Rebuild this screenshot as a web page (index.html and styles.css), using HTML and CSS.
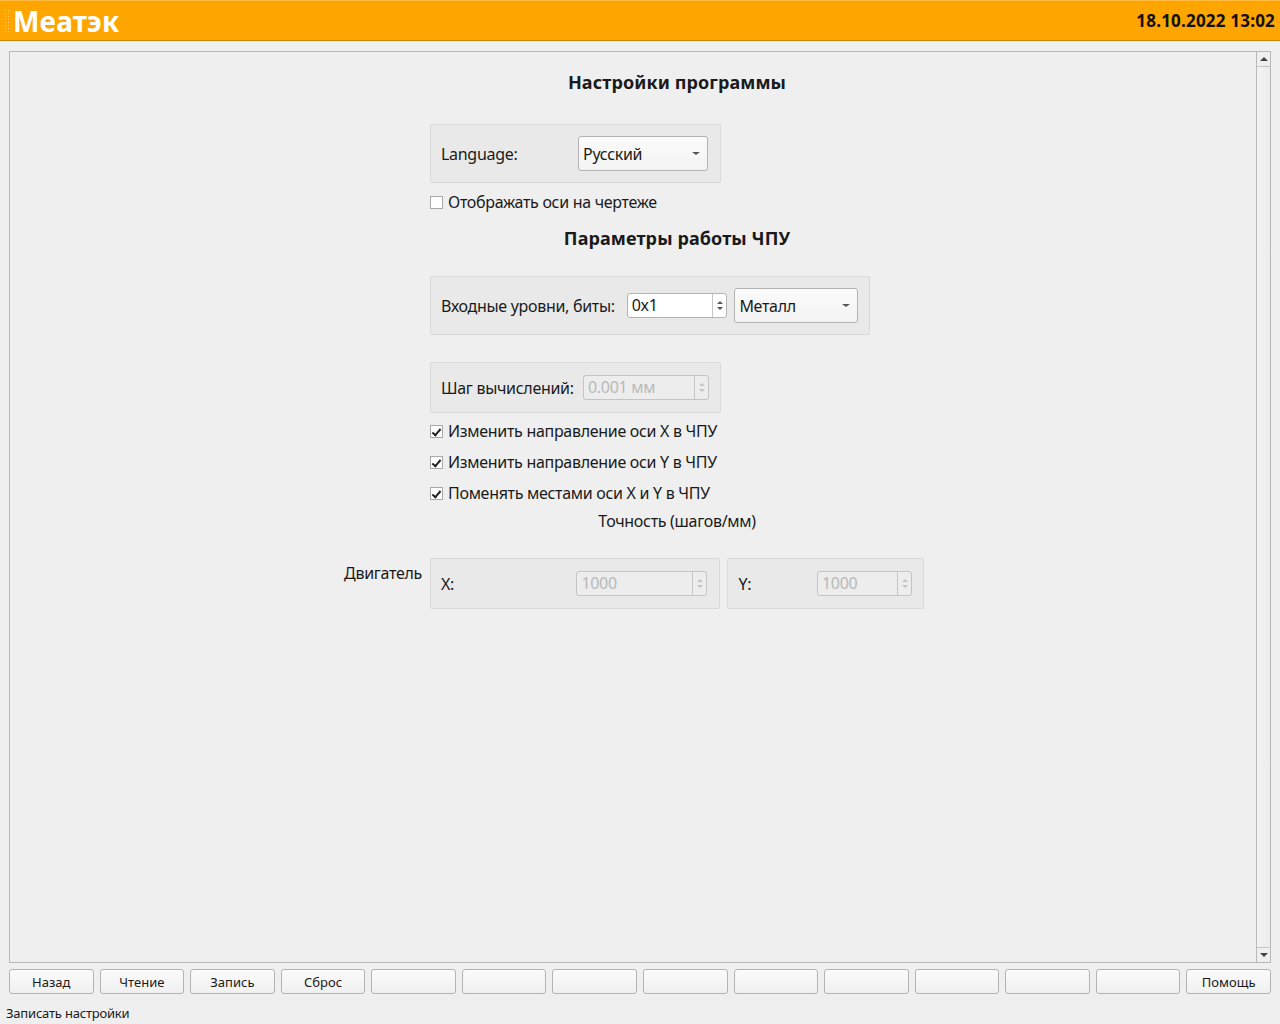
FILE: index.html
```html
<!DOCTYPE html>
<html lang="ru">
<head>
<meta charset="utf-8">
<link rel="stylesheet" href="styles.css">
</head>
<body>
<header class="topbar">
  <div class="brand">
    <span class="grip"></span>
    <span class="title">Меатэк</span>
  </div>
  <div class="clock">18.10.2022 13:02</div>
</header>

<main class="frame">
  <div class="scroll-area">
    <div class="form">
      <div class="col-full"><h1 class="heading h-first">Настройки программы</h1></div>

      <div class="col-main">
        <div class="group g-lang">
          <span class="lbl">Language:</span>
          <div class="combo c-lang"><span>Русский</span><i class="caret"></i></div>
        </div>
      </div>

      <div class="col-main">
        <label class="check"><span class="box"></span>Отображать оси на чертеже</label>
      </div>

      <div class="col-main"><h2 class="heading h-second">Параметры работы ЧПУ</h2></div>

      <div class="col-main">
        <div class="group g-levels">
          <span class="lbl">Входные уровни, биты:</span>
          <div class="spin s-levels"><span class="val">0x1</span><span class="arrows"><i class="up"></i><i class="down"></i></span></div>
          <div class="combo c-metal"><span>Металл</span><i class="caret"></i></div>
        </div>
      </div>

      <div class="col-main">
        <div class="group g-step">
          <span class="lbl">Шаг вычислений:</span>
          <div class="spin disabled s-step"><span class="val">0.001 мм</span><span class="arrows"><i class="up"></i><i class="down"></i></span></div>
        </div>
      </div>

      <div class="col-main checks">
        <label class="check"><span class="box on"></span>Изменить направление оси X в ЧПУ</label>
        <label class="check"><span class="box on"></span>Изменить направление оси Y в ЧПУ</label>
        <label class="check"><span class="box on"></span>Поменять местами оси X и Y в ЧПУ</label>
      </div>

      <div class="col-main center-text accuracy">Точность (шагов/мм)</div>

      <div class="side-label">Двигатель</div>
      <div class="col-main motors">
        <div class="group g-mx">
          <span class="lbl">X:</span>
          <div class="spin disabled s-mx"><span class="val">1000</span><span class="arrows"><i class="up"></i><i class="down"></i></span></div>
        </div>
        <div class="group g-my">
          <span class="lbl">Y:</span>
          <div class="spin disabled s-my"><span class="val">1000</span><span class="arrows"><i class="up"></i><i class="down"></i></span></div>
        </div>
      </div>
    </div>
  </div>
  <div class="scrollbar">
    <div class="sb-btn"><i class="sb-up"></i></div>
    <div class="sb-track"></div>
    <div class="sb-btn sb-bottom"><i class="sb-down"></i></div>
  </div>
</main>

<nav class="buttons">
  <button class="btn">Назад</button>
  <button class="btn">Чтение</button>
  <button class="btn">Запись</button>
  <button class="btn">Сброс</button>
  <button class="btn"></button>
  <button class="btn"></button>
  <button class="btn"></button>
  <button class="btn"></button>
  <button class="btn"></button>
  <button class="btn"></button>
  <button class="btn"></button>
  <button class="btn"></button>
  <button class="btn"></button>
  <button class="btn">Помощь</button>
</nav>

<footer class="status">Записать настройки</footer>
</body>
</html>
```

FILE: styles.css
```css
* { box-sizing: border-box; }
html, body { margin: 0; padding: 0; }
body {
  width: 1280px;
  height: 1024px;
  background: #efefef;
  font-family: "Noto Sans", "Open Sans", sans-serif;
  color: #1a1a1a;
  overflow: hidden;
}

.topbar {
  height: 41px;
  background: #ffa500;
  border-top: 1px solid #ffbb40;
  border-bottom: 1px solid #c98400;
  display: flex;
  align-items: center;
  justify-content: space-between;
  padding: 0 5px 0 4px;
}
.brand { display: flex; align-items: center; }
.grip {
  width: 6px;
  height: 24px;
  margin-right: 3px;
  background-image: radial-gradient(circle, #ffd27a 0.8px, transparent 1px);
  background-size: 3px 3px;
}
.title {
  color: #fff;
  font-weight: 700;
  font-size: 28px;
  letter-spacing: 0.2px;
  line-height: 1;
  margin-top: 1px;
}
.clock {
  font-weight: 700;
  font-size: 17px;
  color: #111;
  margin-top: -1px;
  letter-spacing: 0.2px;
}

.frame {
  margin: 10px 9px 0 9px;
  height: 912px;
  border: 1px solid #b9b9b9;
  display: flex;
  background: #efefef;
}
.scroll-area { flex: 1; }
.scrollbar {
  width: 14px;
  border-left: 1px solid #b9b9b9;
  display: flex;
  flex-direction: column;
}
.sb-btn {
  height: 15px;
  display: flex;
  align-items: center;
  justify-content: center;
  border-bottom: 1px solid #c4c4c4;
}
.sb-bottom { border-bottom: none; border-top: 1px solid #c4c4c4; }
.sb-track { flex: 1; background: linear-gradient(90deg, #f4f4f4, #ececec); }
.sb-up { width: 0; height: 0; border-left: 4px solid transparent; border-right: 4px solid transparent; border-bottom: 4px solid #444; }
.sb-down { width: 0; height: 0; border-left: 4px solid transparent; border-right: 4px solid transparent; border-top: 4px solid #444; }

.form {
  display: grid;
  grid-template-columns: 80px 494px;
  column-gap: 8px;
  justify-content: center;
  padding-top: 18px;
  font-size: 16px;
  letter-spacing: -0.3px;
}
.col-full, .col-main { grid-column: 2; }
.heading {
  margin: 0;
  font-size: 18px;
  font-weight: 700;
  text-align: center;
  line-height: 24px;
  letter-spacing: 0.1px;
}
.h-first { margin-bottom: 30px; }
.h-second { margin: 13px 0 26px; }

.group {
  background: #e9e9e9;
  border: 1px solid #d9d9d9;
  border-radius: 2px;
  display: flex;
  align-items: center;
  padding: 0 10px;
}
.lbl { white-space: nowrap; }
.g-lang { width: 291px; height: 59px; justify-content: space-between; padding-right: 12px; }
.g-levels { width: 440px; height: 59px; padding-right: 11px; }
.g-levels .lbl { margin-right: 12px; }
.g-step { width: 291px; height: 51px; margin-top: 27px; justify-content: space-between; padding-right: 11px; }

.combo {
  height: 35px;
  border: 1px solid #b3b3b3;
  border-radius: 3px;
  background: linear-gradient(#fbfbfb, #f3f3f3);
  display: flex;
  align-items: center;
  justify-content: space-between;
  padding: 0 7px 0 4px;
}
.c-lang { width: 130px; }
.c-metal { width: 124px; margin-left: 7px; }
.caret { width: 0; height: 0; border-left: 4px solid transparent; border-right: 4px solid transparent; border-top: 3px solid #555; }

.spin {
  height: 25px;
  border: 1px solid #b3b3b3;
  border-radius: 3px;
  background: #fff;
  display: flex;
  align-items: stretch;
}
.spin .val { flex: 1; padding-left: 4px; line-height: 23px; }
.spin .arrows {
  width: 14px;
  border-left: 1px solid #c6c6c6;
  display: flex;
  flex-direction: column;
  align-items: center;
  justify-content: center;
  gap: 3px;
}
.spin .up { width: 0; height: 0; border-left: 3px solid transparent; border-right: 3px solid transparent; border-bottom: 3px solid #555; }
.spin .down { width: 0; height: 0; border-left: 3px solid transparent; border-right: 3px solid transparent; border-top: 3px solid #555; }
.spin.disabled { background: #ededed; border-color: #c4c4c4; color: #b9b9b9; }
.spin.disabled .up { border-bottom-color: #c4c4c4; }
.spin.disabled .down { border-top-color: #c4c4c4; }
.s-levels { width: 101px; }
.s-step { width: 126px; }
.s-mx { width: 131px; }
.s-my { width: 95px; }

.check {
  display: flex;
  align-items: center;
  height: 22px;
  white-space: nowrap;
}
.col-main > .check:only-child { margin-top: 8px; }
.box {
  width: 13px;
  height: 13px;
  background: #fff;
  border: 1px solid #a8a8a8;
  margin-right: 5px;
  position: relative;
  flex: none;
}
.box.on::after {
  content: "";
  position: absolute;
  left: 3px;
  top: 1px;
  width: 3px;
  height: 7px;
  border-right: 2px solid #222;
  border-bottom: 2px solid #222;
  transform: rotate(40deg);
}
.checks {
  display: flex;
  flex-direction: column;
  gap: 9px;
  margin-top: 7px;
}
.center-text { text-align: center; }
.accuracy { margin-top: 6px; line-height: 22px; }

.side-label {
  grid-column: 1;
  text-align: right;
  padding-top: 4px;
  line-height: 22px;
  margin-top: 26px;
  white-space: nowrap;
}
.motors {
  display: flex;
  gap: 7px;
  margin-top: 26px;
}
.g-mx { width: 291px; height: 51px; justify-content: space-between; padding-right: 12px; }
.g-my { width: 197px; height: 51px; justify-content: space-between; padding-right: 11px; }

.buttons {
  display: grid;
  grid-template-columns: repeat(14, 1fr);
  column-gap: 6px;
  margin: 6px 9px 0 9px;
}
.btn {
  height: 25px;
  border: 1px solid #b3b3b3;
  border-radius: 3px;
  background: linear-gradient(#fbfbfb, #f0f0f0);
  font-family: "Noto Sans", "Open Sans", sans-serif;
  font-size: 13px;
  color: #1a1a1a;
  padding: 0;
}
.status {
  font-size: 13px;
  margin: 10px 0 0 6px;
  line-height: 18px;
  letter-spacing: -0.2px;
}
```
